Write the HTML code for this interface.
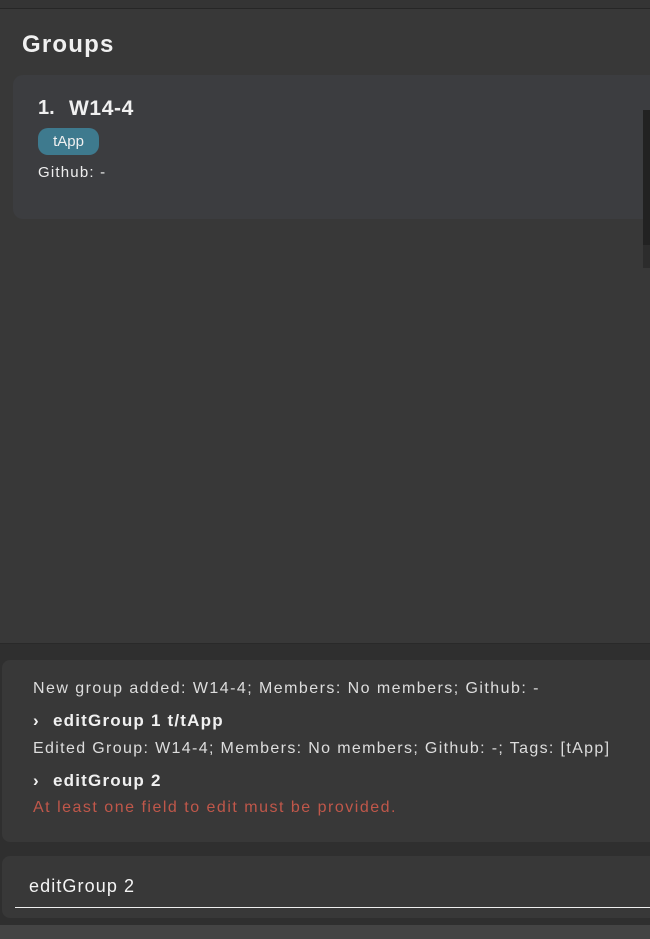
<!DOCTYPE html>
<html><head><style>
body{margin:0;width:650px;height:939px;overflow:hidden;background:#383838;font-family:"Liberation Sans",sans-serif;position:relative}
.a{position:absolute;white-space:nowrap}
</style></head><body>
<div class="a" style="left:0;top:0;width:650px;height:8px;background:#343434;border-bottom:1px solid #262626"></div>
<div class="a" style="left:22px;top:31px;font-size:24px;font-weight:bold;color:#f0f0f0;letter-spacing:1.2px">Groups</div>
<div class="a" style="left:13px;top:75px;width:650px;height:144px;background:#3c3d40;border-radius:10px"></div>
<div class="a" style="left:38px;top:97px;font-size:20px;font-weight:bold;color:#f0f0f0">1.</div>
<div class="a" style="left:69px;top:97px;font-size:21px;font-weight:bold;color:#f0f0f0;letter-spacing:0.6px">W14-4</div>
<div class="a" style="left:38px;top:128px;width:61px;height:27px;background:#3e7a8e;border-radius:10px;color:#f0f0f0;font-size:15px;line-height:27px;text-align:center">tApp</div>
<div class="a" style="left:38px;top:164px;font-size:15px;color:#eee;letter-spacing:1.2px">Github: -</div>
<div class="a" style="left:643px;top:110px;width:7px;height:135px;background:#222"></div>
<div class="a" style="left:643px;top:245px;width:7px;height:23px;background:#2c2c2c"></div>
<div class="a" style="left:0;top:643px;width:650px;height:1px;background:#292929"></div>
<div class="a" style="left:0;top:644px;width:650px;height:295px;background:#2f2f2f"></div>
<div class="a" style="left:2px;top:660px;width:660px;height:182px;background:#383838;border-radius:8px"></div>
<div class="a" style="left:33px;top:680px;font-size:16px;color:#ddd;letter-spacing:1.45px">New group added: W14-4; Members: No members; Github: -</div>
<div class="a" style="left:33px;top:711px;font-size:17px;font-weight:bold;color:#f0f0f0">›</div>
<div class="a" style="left:53px;top:711px;font-size:17px;font-weight:bold;color:#f0f0f0;letter-spacing:1.2px">editGroup 1 t/tApp</div>
<div class="a" style="left:33px;top:740px;font-size:16px;color:#ddd;letter-spacing:1.35px">Edited Group: W14-4; Members: No members; Github: -; Tags: [tApp]</div>
<div class="a" style="left:33px;top:771px;font-size:17px;font-weight:bold;color:#f0f0f0">›</div>
<div class="a" style="left:53px;top:771px;font-size:17px;font-weight:bold;color:#f0f0f0;letter-spacing:1.2px">editGroup 2</div>
<div class="a" style="left:33px;top:799px;font-size:16px;color:#c0574a;letter-spacing:1.5px">At least one field to edit must be provided.</div>
<div class="a" style="left:2px;top:856px;width:660px;height:62px;background:#383838;border-radius:8px"></div>
<div class="a" style="left:29px;top:876px;font-size:18px;color:#f4f4f4;letter-spacing:1.1px">editGroup 2</div>
<div class="a" style="left:15px;top:907px;width:640px;height:1px;background:#eee"></div>
<div class="a" style="left:0;top:925px;width:650px;height:14px;background:#444"></div>
</body></html>
